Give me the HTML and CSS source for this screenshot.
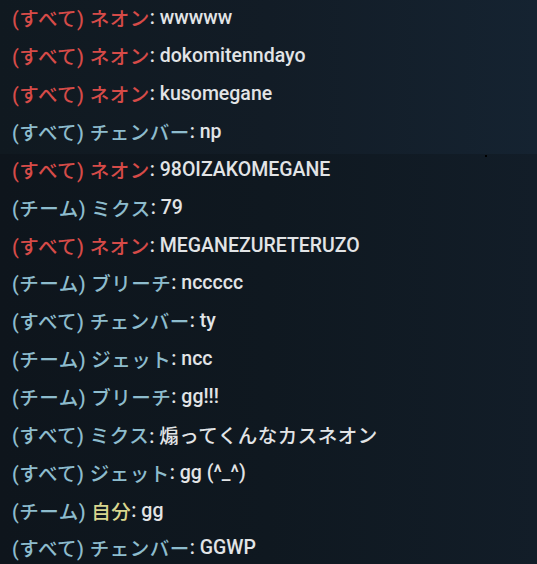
FILE: index.html
```html
<!DOCTYPE html>
<html lang="ja">
<head>
<meta charset="utf-8">
<link rel="stylesheet" href="styles.css">
</head>
<body>
<div class="chat">
  <div class="row"><span class="all">(すべて) ネオン</span><span class="msg">: wwwww</span></div>
  <div class="row"><span class="all">(すべて) ネオン</span><span class="msg">: dokomitenndayo</span></div>
  <div class="row"><span class="all">(すべて) ネオン</span><span class="msg">: kusomegane</span></div>
  <div class="row"><span class="team">(すべて) チェンバー</span><span class="msg">: np</span></div>
  <div class="row"><span class="all">(すべて) ネオン</span><span class="msg">: 98OIZAKOMEGANE</span></div>
  <div class="row"><span class="team">(チーム) ミクス</span><span class="msg">: 79</span></div>
  <div class="row"><span class="all">(すべて) ネオン</span><span class="msg">: MEGANEZURETERUZO</span></div>
  <div class="row"><span class="team">(チーム) ブリーチ</span><span class="msg">: nccccc</span></div>
  <div class="row"><span class="team">(すべて) チェンバー</span><span class="msg">: ty</span></div>
  <div class="row"><span class="team">(チーム) ジェット</span><span class="msg">: ncc</span></div>
  <div class="row"><span class="team">(チーム) ブリーチ</span><span class="msg">: gg!!!</span></div>
  <div class="row"><span class="team">(すべて) ミクス</span><span class="msg">: <span class="jp">煽ってくんなカスネオン</span></span></div>
  <div class="row"><span class="team">(すべて) ジェット</span><span class="msg">: gg (^_^)</span></div>
  <div class="row"><span class="team">(チーム) </span><span class="self">自分</span><span class="msg">: gg</span></div>
  <div class="row"><span class="team">(すべて) チェンバー</span><span class="msg">: GGWP</span></div>
</div>
<div class="speck"></div>
</body>
</html>
```
FILE: styles.css
```css
html, body {
  margin: 0;
  padding: 0;
}
body {
  width: 537px;
  height: 564px;
  overflow: hidden;
  position: relative;
  background-color: #0f171f;
  background-image:
    linear-gradient(90deg, #101920 0%, #121c26 50%, #152331 100%),
    linear-gradient(90deg, #0e151c 0%, #0f1820 50%, #121d28 100%);
  background-size: 100% 154px, 100% 410px;
  background-position: 0 0, 0 154px;
  background-repeat: no-repeat;
  font-family: Roboto, "Noto Sans CJK JP", sans-serif;
  font-size: 19.5px;
  font-weight: 500;
}
.chat {
  display: grid;
  grid-auto-rows: 37.86px;
  padding: 0 0 0 12px;
  margin-top: -1px;
}
.row {
  display: flex;
  align-items: center;
  white-space: pre;
}
.all, .team, .self, .jp { letter-spacing: 0.5px; }
.all { color: #d64b48; }
.team { color: #8dbccd; }
.self { color: #d9d68e; }
.msg { color: #e2e4e6; }
.speck {
  position: absolute;
  left: 485px;
  top: 155px;
  width: 2px;
  height: 2px;
  background: #000;
}
```
